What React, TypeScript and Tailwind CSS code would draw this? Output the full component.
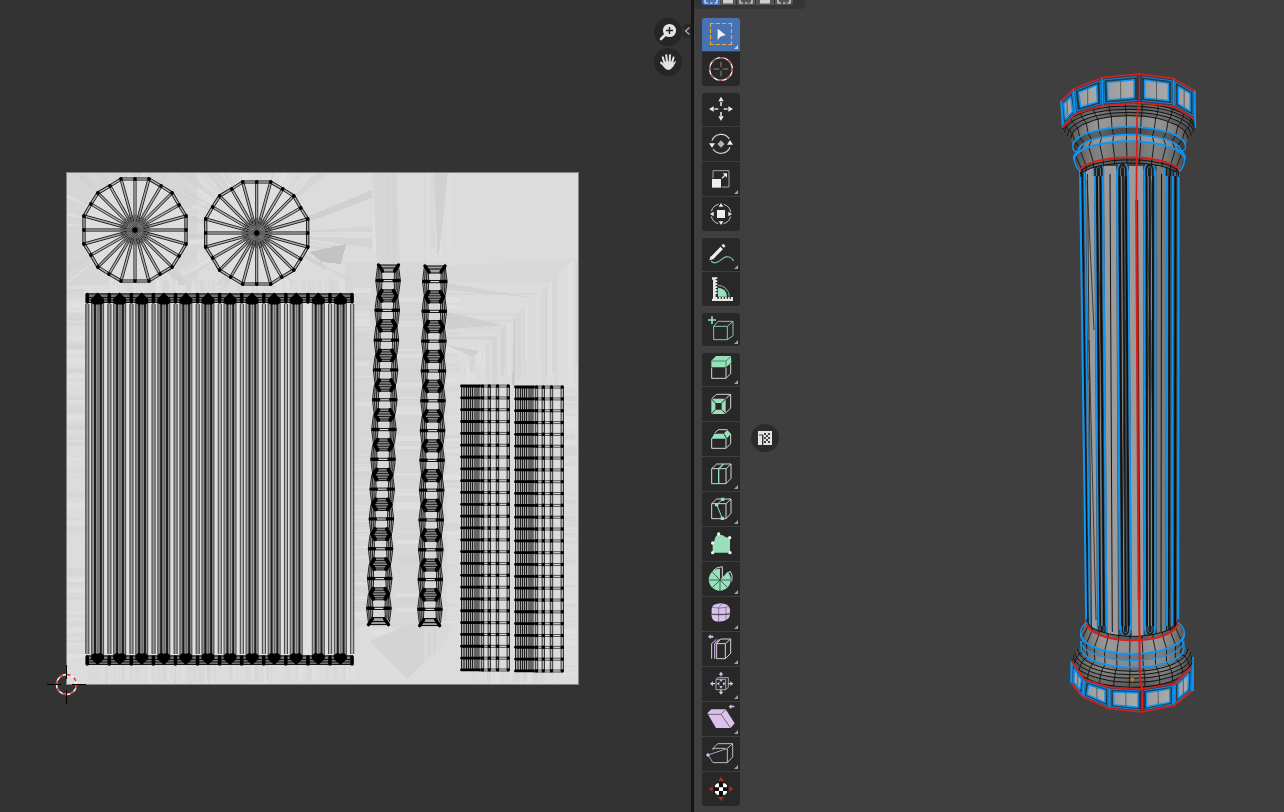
import React from "react";

type Pt = [number, number];

const INK = "#0a0a0a";
const BLUE = "#0e96f5";
const RED = "#d8201a";
const MINT = "#97e0bb";
const LILAC = "#d9c3ea";
const LINE = "#d4d4d4";

function makeRandom(seed: number) {
  let s = seed;
  return () => {
    s = (s * 16807) % 2147483647;
    return s / 2147483647;
  };
}

const pts = (list: Pt[]) => list.map((p) => p.join(",")).join(" ");

/* ---------- UV editor: baked texture ---------- */

function streakBlock(seed: number, x: number, y: number, w: number, h: number, dir: "h" | "v", n: number) {
  const r = makeRandom(seed * 7919);
  const tones = ["#d2d2d2", "#d5d5d5", "#d8d8d8", "#e1e1e1", "#e3e3e3", "#d6d6d6"];
  return Array.from({ length: n }, (_, i) => {
    const tone = tones[Math.floor(r() * tones.length)];
    const t = 1 + Math.floor(r() * 5);
    const at = r();
    return dir === "h" ? (
      <rect key={`${seed}-${i}`} x={x} y={y + Math.floor(at * h)} width={w * (0.8 + r() * 0.2)} height={t} fill={tone} opacity={0.6} />
    ) : (
      <rect key={`${seed}-${i}`} x={x + Math.floor(at * w)} y={y} width={t} height={h * (0.8 + r() * 0.2)} fill={tone} opacity={0.6} />
    );
  });
}

function rays(seed: number, cx: number, cy: number) {
  const r = makeRandom(seed * 7919);
  return Array.from({ length: 46 }, (_, i) => {
    const a = r() * Math.PI * 2;
    const d = 0.01 + r() * 0.05;
    const len = 70 + r() * 50;
    const tone = ["#d0d0d0", "#e2e2e2", "#d5d5d5", "#cfcfcf"][Math.floor(r() * 4)];
    return (
      <polygon
        key={i}
        fill={tone}
        opacity={0.6}
        points={pts([
          [cx + Math.cos(a) * 30, cy + Math.sin(a) * 30],
          [cx + Math.cos(a - d) * len, cy + Math.sin(a - d) * len],
          [cx + Math.cos(a + d) * len, cy + Math.sin(a + d) * len],
        ])}
      />
    );
  });
}

function Texture() {
  return (
    <g shapeRendering="crispEdges">
      <rect x={67} y={173} width={511} height={511} fill="#dcdcdc" />
      <rect x={67} y={173} width={130} height={112} fill="#d6d6d6" />
      <rect x={345} y={262} width={102} height={365} fill="#d7d7d7" />
      <g clipPath="url(#wheelArea)">
        {rays(11, 135, 230)}
        {rays(57, 257, 233)}
      </g>
      <polygon points="309,252 346,244 341,264 322,262" fill="#c3c3c3" />
      <polygon points="309,216 372,190 372,198 309,222" fill="#d0d0d0" />
      {streakBlock(3, 67, 285, 20, 380, "h", 90)}
      {streakBlock(4, 353, 285, 20, 340, "h", 90)}
      {streakBlock(5, 396, 262, 28, 365, "h", 80)}
      {streakBlock(6, 443, 262, 18, 365, "h", 50)}
      {streakBlock(7, 563, 385, 15, 290, "h", 70)}
      {streakBlock(8, 86, 665, 267, 19, "v", 80)}
      {streakBlock(9, 86, 280, 267, 14, "v", 60)}
      {streakBlock(10, 372, 173, 32, 92, "v", 8)}
      {streakBlock(12, 418, 173, 30, 92, "v", 8)}
      {streakBlock(13, 461, 671, 102, 13, "v", 30)}
      <polygon points="372,173 396,173 400,264 377,264" fill="#d3d3d3" opacity={0.7} />
      <polygon points="434,173 448,173 438,264" fill="#d1d1d1" />
      <g clipPath="url(#belowDiagonal)">{streakBlock(14, 461, 262, 117, 124, "v", 50)}</g>
      <g clipPath="url(#aboveDiagonal)">
        {streakBlock(15, 446, 290, 110, 80, "h", 12)}
        <polygon points="447,266 576,258 552,283 447,282" fill="#d8d8d8" opacity={0.8} />
        <polygon points="447,312 503,325 447,329" fill="#cfcfcf" />
        <polygon points="447,345 480,351 472,357" fill="#d0d0d0" />
        <polygon points="447,283 535,298 447,290" fill="#d2d2d2" />
      </g>
      <polygon points="515,305 515,385 512,385" fill="#cbcbcb" />
      <path d="M545 290V382" stroke="#cfcfcf" />
      <polygon points="369,630 404,630 404,670" fill="#e0e0e0" />
      <polygon points="404,626 424,626 424,662 407,679 370,641" fill="#d4d4d4" />
      <polygon points="424,626 451,626 445,645 424,664" fill="#d9d9d9" />
      <path d="M429 628v30M434 628v26" stroke="#d0d0d0" />
    </g>
  );
}

/* ---------- UV editor: islands ---------- */

const QUADRANT: Pt[] = [
  [0, -51], [14, -51], [26, -44], [37, -37], [44, -25], [51, -14],
];

function wheelRim(): Pt[] {
  const out: Pt[] = [];
  for (let q = 0; q < 4; q++) {
    for (const [x, y] of QUADRANT) {
      if (q === 0) out.push([x, y]);
      if (q === 1) out.push([-y, x]);
      if (q === 2) out.push([-x, -y]);
      if (q === 3) out.push([y, -x]);
    }
  }
  return out;
}

function Wheel({ x, y }: { x: number; y: number }) {
  const rim = wheelRim();
  return (
    <g transform={`translate(${x} ${y})`}>
      <polygon points={pts(rim)} fill="#dedede" />
      {rim.map(([px, py], i) => (
        <path key={i} d={`M0 0L${px} ${py}`} stroke={INK} strokeWidth={3} />
      ))}
      <polygon points={pts(rim)} fill="none" stroke={INK} strokeWidth={3.2} />
      {rim.map(([px, py], i) => (
        <path key={i} d={`M${px * 0.05} ${py * 0.05}L${px} ${py}`} stroke="#a8a8a8" strokeWidth={1.6} />
      ))}
      <polygon points={pts(rim)} fill="none" stroke="#a8a8a8" strokeWidth={1.5} />
      {rim.map(([px, py], i) => (
        <path key={i} d={`M0 0L${px * 0.3} ${py * 0.3}`} stroke="#222" strokeWidth={0.7} />
      ))}
      {rim.map(([px, py], i) => (
        <circle key={i} cx={px} cy={py} r={1.9} fill="#000" />
      ))}
      <circle r={2.6} fill="#000" />
    </g>
  );
}

function FlutedIsland() {
  const caps = Array.from({ length: 12 }, (_, i) => 97.6 + i * 22.07);
  const seams = Array.from({ length: 13 }, (_, i) => 87.2 + i * 22.07);
  return (
    <g>
      <rect x={86} y={294} width={267} height={370} fill="#e0e0e0" />
      {seams.map((x, i) => (
        <g key={i} opacity={i === 10 ? 0 : 1}>
          <rect x={x - 1.6} y={304} width={3.4} height={350} fill={i < 6 ? "#9a9a9a" : "#b4b4b4"} />
          <path d={`M${x - 1.4} 304V654M${x + 1.7} 304V654`} stroke="#333" strokeWidth={0.9} />
        </g>
      ))}
      {caps.map((x, i) => (
        <g key={i}>
          <rect x={x - 6} y={300} width={12} height={358} fill={i < 6 ? "#8d8d8d" : "#a3a3a3"} />
          <path d={`M${x - 6} 300V658M${x + 6} 300V658`} stroke="#3a3a3a" strokeWidth={0.9} />
          <path d={`M${x - 2.6} 300V658M${x + 3.2} 300V658`} stroke="#1e1e1e" strokeWidth={2} />
          <path d={`M${x + 0.4} 300V658`} stroke="#505050" strokeWidth={0.8} />
        </g>
      ))}
      {[293, 655].map((y) => (
        <g key={y}>
          <rect x={86} y={y} width={267} height={10} fill="#747474" />
          <path d={`M86 ${y + 1}H353M86 ${y + 4.5}H353M86 ${y + 7}H353M86 ${y + 9.5}H353`} stroke="#151515" strokeWidth={1} />
        </g>
      ))}
      {seams.map((x, i) => (
        <path key={i} d={`M${x} 294.500V302M${x} 657V664`} stroke="#000" strokeWidth={3.6} strokeLinecap="round" />
      ))}
      {caps.map((x, i) => (
        <g key={i} fill="#000">
          <path d={`M${x} 292.500L${x + 6.5} 299V302Q${x + 5} 305 ${x + 2} 304.500H${x - 2}Q${x - 5} 305 ${x - 6.5} 302V299Z`} />
          <path d={`M${x} 665L${x + 6.5} 659V656Q${x + 5} 653 ${x + 2} 653L${x} 654L${x - 2} 653Q${x - 5} 653 ${x - 6.5} 656V659Z`} />
        </g>
      ))}
    </g>
  );
}

function ChainIsland({ topX, bottomX, topY }: { topX: number; bottomX: number; topY: number }) {
  const step = 29.8;
  const at = (y: number) => topX + ((bottomX - topX) * (y - topY)) / (step * 12);
  const hexes = Array.from({ length: 13 }, (_, i) => topY + 1 + i * step);
  const bars = Array.from({ length: 12 }, (_, i) => topY + 15.5 + i * step);
  return (
    <g fill="none" stroke="#000">
      {bars.map((y, i) => {
        const x = at(y);
        return (
          <g key={i}>
            {[-1, 1].map((s) => (
              <g key={s} strokeWidth={0.9} stroke="#111">
                {[-1, 1].map((v) => (
                  <g key={v}>
                    <polygon
                      points={pts([[x + s * 12, y], [x + s * 10.5, y + v * 14], [x + s * 6.5, y + v * 9], [x + s * 6, y]])}
                      fill="#aaaaaa"
                      stroke="none"
                    />
                    <path d={`M${x + s * 12.3} ${y}L${x + s * 10.5} ${y + v * 14}M${x + s * 10.3} ${y}L${x + s * 9.5} ${y + v * 12}M${x + s * 8.3} ${y}L${x + s * 8} ${y + v * 10}M${x + s * 6} ${y}L${x + s * 6.5} ${y + v * 9}`} />
                  </g>
                ))}
              </g>
            ))}
            <path d={`M${x - 6} ${y - 1}H${x + 6}M${x - 6} ${y + 1.2}H${x + 6}`} strokeWidth={0.9} />
            <path d={`M${x - 11} ${y}h5M${x + 6} ${y}h5`} strokeWidth={3.4} strokeLinecap="round" />
          </g>
        );
      })}
      {hexes.map((y, i) => {
        const x = at(y);
        if (i === 0 || i === 12) {
          const v = i === 0 ? 1 : -1;
          return (
            <g key={i}>
              <polygon points={pts([[x - 10, y - v], [x + 10, y - v], [x + 6, y + v * 6], [x - 6, y + v * 6]])} fill="#a0a0a0" strokeWidth={1} />
              <path d={`M${x - 8} ${y + v * 2}H${x + 8}`} strokeWidth={1} />
              <path d={`M${x - 10} ${y - v}L${x - 6} ${y + v * 5}M${x + 10} ${y - v}L${x + 6} ${y + v * 5}`} strokeWidth={3.4} strokeLinecap="round" />
            </g>
          );
        }
        return (
          <g key={i}>
            <polygon points={pts([[x - 10, y], [x - 6, y - 6], [x + 6, y - 6], [x + 10, y], [x + 6, y + 6], [x - 6, y + 6]])} fill="#8a8a8a" strokeWidth={0.9} />
            <path d={`M${x - 8} ${y - 3.5}H${x + 8}M${x - 8} ${y - 1}H${x + 8}M${x - 8} ${y + 1.5}H${x + 8}M${x - 8} ${y + 4}H${x + 8}`} strokeWidth={0.8} />
            <path d={`M${x - 6} ${y - 5}L${x - 9} ${y}L${x - 6} ${y + 5}M${x + 6} ${y - 5}L${x + 9} ${y}L${x + 6} ${y + 5}`} strokeWidth={4} strokeLinecap="round" strokeLinejoin="round" />
          </g>
        );
      })}
    </g>
  );
}

function GridIsland({ x, y }: { x: number; y: number }) {
  const rows = Array.from({ length: 25 }, (_, i) => y + i * 11.83);
  const h = 284;
  return (
    <g fill="none" stroke="#111">
      <rect x={x} y={y} width={18} height={h} fill="#a6a6a6" stroke="none" />
      {[0.5, 3, 5.5, 7.5, 9.5, 11.5, 14, 16, 18].map((d) => (
        <path key={d} d={`M${x + d} ${y}v${h}`} strokeWidth={0.9} />
      ))}
      {[21.5, 28.3, 36.5, 47.3].map((d) => (
        <g key={d}>
          <rect x={x + d - 1.2} y={y} width={2.4} height={h} fill="#b5b5b5" stroke="none" />
          <path d={`M${x + d - 1.2} ${y}v${h}M${x + d + 1.2} ${y}v${h}`} strokeWidth={0.8} />
        </g>
      ))}
      {rows.map((ry, i) => (
        <g key={i}>
          <path d={`M${x + 18} ${ry - 0.9}h30M${x + 18} ${ry + 1.1}h30`} strokeWidth={0.7} />
          <path d={`M${x + 0.5} ${ry}h18`} stroke="#000" strokeWidth={2.8} strokeLinecap="round" />
          {[21.5, 28.3, 36.5, 47.3].map((d) => (
            <circle key={d} cx={x + d} cy={ry} r={1.7} fill="#000" stroke="none" />
          ))}
        </g>
      ))}
    </g>
  );
}

function UvCanvas() {
  return (
    <svg className="absolute inset-0 h-full w-full" role="img" aria-label="UV layout">
      <defs>
        <clipPath id="wheelArea"><rect x={67} y={173} width={305} height={112} /></clipPath>
        <clipPath id="belowDiagonal"><polygon points="455,375 578,255 578,386 455,386" /></clipPath>
        <clipPath id="aboveDiagonal"><polygon points="446,255 578,255 455,375 446,380" /></clipPath>
      </defs>
      <rect x={66.5} y={172.5} width={512} height={512} fill="#dcdcdc" stroke="#858585" />
      <Texture />
      <Wheel x={135} y={230} />
      <Wheel x={256.7} y={233} />
      <FlutedIsland />
      <ChainIsland topX={388.5} bottomX={378.5} topY={265} />
      <ChainIsland topX={435} bottomX={429.7} topY={266} />
      <GridIsland x={461} y={386} />
      <GridIsland x={515} y={387} />
      <circle cx={66.5} cy={684.5} r={10} fill="none" stroke="#f5f5f5" strokeWidth={1.4} />
      <circle cx={66.5} cy={684.5} r={10} fill="none" stroke="#ee2222" strokeWidth={1.4} strokeDasharray="3.93 3.92" />
      <path d="M47 684.500h14M72 684.500h14M66.500 665v14M66.500 690v14" stroke="#000" />
    </svg>
  );
}

/* ---------- 3D viewport: column mesh ---------- */

type Ring = { l: number; r: number; end: number; apex: number; color?: string; w?: number };

const CAPITAL: Ring[] = [
  { l: 38, r: 434, end: 185, apex: 115 },
  { l: 40, r: 433, end: 192, apex: 123 },
  { l: 44, r: 430, end: 202, apex: 133 },
  { l: 52, r: 424, end: 212, apex: 142 },
  { l: 62, r: 414, end: 222, apex: 152 },
  { l: 69, r: 406, end: 242, apex: 186, color: BLUE, w: 5 },
  { l: 84, r: 392, end: 258, apex: 209, color: BLUE, w: 5 },
  { l: 72, r: 404, end: 283, apex: 229, color: BLUE, w: 6 },
  { l: 90, r: 388, end: 320, apex: 277, color: RED, w: 5 },
  { l: 91, r: 387, end: 327, apex: 285 },
  { l: 92, r: 386, end: 335, apex: 294 },
];

const BASE: Ring[] = [
  { l: 80, r: 355, end: 88, apex: 139 },
  { l: 80, r: 355, end: 96, apex: 151, color: RED, w: 6 },
  { l: 62, r: 373, end: 130, apex: 192, color: BLUE, w: 6 },
  { l: 62, r: 372, end: 153, apex: 211, color: BLUE, w: 4 },
  { l: 64, r: 372, end: 175, apex: 232, color: BLUE, w: 5 },
  { l: 53, r: 384, end: 176, apex: 244 },
  { l: 45, r: 391, end: 186, apex: 254 },
  { l: 40, r: 396, end: 196, apex: 265 },
  { l: 36, r: 399, end: 206, apex: 277 },
  { l: 34, r: 400, end: 214, apex: 292 },
];

const ringPoint = (g: Ring, a: number): Pt => [
  Math.round((g.l + g.r) / 2 - ((g.r - g.l) / 2) * Math.cos(a)),
  Math.round(g.end + (g.apex - g.end) * Math.sin(a)),
];

const arc = (g: Ring): Pt[] => Array.from({ length: 25 }, (_, i) => ringPoint(g, (Math.PI * i) / 24));

function Rings({ rings, tones }: { rings: Ring[]; tones: string[] }) {
  const angles = Array.from({ length: 11 }, (_, i) => (Math.PI * (i + 0.9)) / 12.2);
  return (
    <g fill="none" strokeLinejoin="round">
      {rings.slice(1).map((g, i) => (
        <polygon key={i} points={pts([...arc(rings[i]), ...arc(g).reverse()])} fill={tones[i % tones.length]} stroke="none" />
      ))}
      {rings.slice(1).map((g, i) => (
        <polygon key={i} points={pts([...arc(rings[i]), ...arc(g).reverse()])} fill="url(#roundShade)" stroke="none" />
      ))}
      {angles.map((a) => (
        <polyline key={a} points={pts(rings.map((g) => ringPoint(g, a)))} stroke="#0e0e0e" strokeWidth={2.6} />
      ))}
      {rings.map((g, i) => (
        <polyline key={i} points={pts(arc(g))} stroke={g.color ?? "#101010"} strokeWidth={g.w ?? 3} />
      ))}
    </g>
  );
}

function BlockRim({ upper, lower, inset }: { upper: Pt[]; lower: Pt[]; inset: number }) {
  return (
    <g strokeLinejoin="round">
      <polygon points={pts([...upper, ...[...lower].reverse()])} fill="#23405a" />
      {upper.slice(1).map((b, i) => {
        const a = upper[i];
        const c = lower[i + 1];
        const d = lower[i];
        const w = b[0] - a[0];
        const k = Math.min(inset, w * 0.22);
        const v = inset;
        const slopeT = (b[1] - a[1]) / w;
        const slopeB = (c[1] - d[1]) / (c[0] - d[0]);
        const quad = (m: number, n: number): Pt[] => [
          [a[0] + m, a[1] + slopeT * m + n],
          [b[0] - m, b[1] - slopeT * m + n],
          [c[0] - m, c[1] - slopeB * m - n],
          [d[0] + m, d[1] + slopeB * m - n],
        ];
        const inner = quad(k, v);
        const mid = (inner[0][0] + inner[1][0]) / 2;
        return (
          <g key={i}>
            <polygon points={pts(quad(k * 0.35, v * 0.45))} fill="#2a3a44" stroke={BLUE} strokeWidth={2.6} />
            <polygon points={pts(inner)} fill="url(#panelShade)" stroke={BLUE} strokeWidth={4.5} />
            <path d={`M${mid} ${(inner[0][1] + inner[1][1]) / 2}V${(inner[2][1] + inner[3][1]) / 2}`} stroke="#3a3a3a" strokeWidth={2} />
          </g>
        );
      })}
      {upper.map((p, i) => (
        <path key={i} d={`M${p[0]} ${p[1]}L${lower[i][0]} ${lower[i][1]}`} stroke={i === 3 ? RED : BLUE} strokeWidth={5} />
      ))}
      <path d={`M${upper[3][0] - 5} ${upper[3][1] + 4}V${lower[3][1] - 4}M${upper[3][0] + 5} ${upper[3][1] + 4}V${lower[3][1] - 4}`} stroke="#401010" strokeWidth={2.5} />
      <g fill="none" stroke={RED} strokeWidth={5}>
        <polyline points={pts(upper)} />
        <polyline points={pts(lower)} />
      </g>
    </g>
  );
}

const LANDS: [number, number, number, number][] = [
  [1086, 1094, 1091, 1097],
  [1104, 1116, 1107.5, 1118],
  [1129, 1143, 1132, 1143.5],
  [1156.5, 1166, 1157, 1165.5],
];

const SHAFT_BLUE: [number, number, number][] = [
  [1080, 1086.3, 2], [1084.5, 1089.8, 1.6], [1094.8, 1098.5, 1.7], [1102.8, 1106.5, 2], [1117, 1120, 2],
  [1128, 1131, 1.9], [1144.3, 1144.8, 2], [1155.3, 1155.3, 1.8], [1167, 1167, 1.8], [1172.8, 1172, 1.8], [1178.6, 1178.2, 2],
];

const SHAFT_DARK: [number, number, number][] = [
  [1082, 1088, 1.6], [1087.5, 1091.5, 0.8], [1097, 1100, 1.8], [1100.3, 1104, 1.6], [1119.5, 1122.3, 2], [1123, 1125.8, 1.2],
  [1126, 1129, 1.8], [1146.5, 1147, 1.8], [1149.8, 1149.8, 1.2], [1153, 1153, 1.8], [1169.3, 1168.9, 1.6], [1175.5, 1175, 2], [1110, 1112.3, 1], [1161.5, 1161, 1],
];

function Shaft() {
  return (
    <g>
      <polygon points="1079,172 1179,172 1178.5,634 1086,634" fill="#454a4e" />
      {LANDS.map((l, i) => (
        <polygon key={i} points={pts([[l[0], 166], [l[1], 166], [l[3], 638], [l[2], 638]])} fill={i === 3 ? "#7c7c7c" : "#9b9b9b"} />
      ))}
      {[[1098.6, 1102], [1121.3, 1124], [1148, 1148.5], [1151.5, 1151.5]].map(([a, b]) => (
        <path key={a} d={`M${a} 175L${b} 632`} stroke="#858585" strokeWidth={1} />
      ))}
      {SHAFT_DARK.map(([a, b, w]) => (
        <path key={a} d={`M${a} 174L${b} 632`} stroke="#121212" strokeWidth={w} />
      ))}
      {[[1096, 1102, 1104, 1099], [1118, 1125, 1121, 1130], [1146, 1152, 1153, 1147]].map(([a, b, c, d]) => (
        <path key={a} d={`M${a} 180L${c} 430M${b} 180L${d} 420M${b} 320L${c} 630`} stroke="#111" strokeWidth={0.8} opacity={0.7} />
      ))}
      <path d="M1087 180L1094 330M1089 340L1096 620M1082 180L1088 380" stroke="#222" strokeWidth={0.8} />
      {SHAFT_BLUE.map(([a, b, w]) => (
        <path key={a} d={`M${a} 170L${b} 630`} stroke={BLUE} strokeWidth={w} />
      ))}
      {[[1098.5, 1102], [1122.5, 1125.5], [1149.5, 1150], [1170, 1169.7]].map(([a, b]) => (
        <g key={a} fill="#1f2224" stroke={BLUE} strokeWidth={1.5}>
          <path d={`M${a - 5} 176V168Q${a} 156 ${a + 5} 168V176`} />
          <path d={`M${b - 4.5} 626V632Q${b} 641 ${b + 4.5} 632V626`} />
          <path d={`M${a - 2} 176V169Q${a} 164 ${a + 2} 169V176`} stroke="#777" strokeWidth={0.8} />
          <path d={`M${b - 2} 626V631Q${b} 635 ${b + 2} 631V626`} stroke="#777" strokeWidth={0.8} />
        </g>
      ))}
    </g>
  );
}

function ColumnMesh() {
  return (
    <svg className="absolute inset-0 h-full w-full" role="img" aria-label="Column mesh">
      <defs>
        <linearGradient id="roundShade" x1="0" x2="1" y1="0" y2="0">
          <stop offset="0" stopColor="#222" stopOpacity={0.55} />
          <stop offset="0.35" stopColor="#fff" stopOpacity={0.05} />
          <stop offset="0.6" stopColor="#fff" stopOpacity={0} />
          <stop offset="1" stopColor="#222" stopOpacity={0.55} />
        </linearGradient>
        <linearGradient id="panelShade" x1="0" x2="1" y1="0" y2="0">
          <stop offset="0" stopColor="#9a9da0" />
          <stop offset="1" stopColor="#aaaaaa" />
        </linearGradient>
      </defs>
      <g transform="translate(-694 0)">
        <Shaft />
        <g transform="translate(1050 65) scale(0.33333)">
          <Rings rings={CAPITAL} tones={["#666", "#555", "#6a6a6a", "#5c5c5c", "#8c8c8c", "#484848", "#929292", "#757575", "#4a4a4a", "#555"]} />
          <path d="M69 242Q66 262 84 260M84 258Q66 270 72 286M406 242Q410 258 392 258M392 258Q410 266 404 284M72 284Q76 306 91 320M404 284Q402 306 388 320" fill="none" stroke={BLUE} strokeWidth={4} />
          <BlockRim
            upper={[[33, 108], [70, 72], [156, 38], [268, 27], [371, 41], [434, 77]]}
            lower={[[38, 187], [76, 147], [158, 122], [268, 113], [371, 124], [434, 163]]}
            inset={16}
          />
          <path d="M434 77L436 188" stroke={BLUE} strokeWidth={5} />
          <path d="M268 113V126L261 150L259 420" fill="none" stroke={RED} strokeWidth={5} />
        </g>
        <path d="M1136.300 200L1138.800 600" stroke={RED} strokeWidth={2.4} />
        <path d="M1137.600 200L1140 600" stroke="#7c1512" strokeWidth={1} />
        <g transform="translate(1060 590) scale(0.33333)">
          <Rings rings={BASE} tones={["#555", "#8e8e8e", "#707070", "#858585", "#6a6a6a", "#7c7c7c", "#707070", "#666", "#5a5a5a"]} />
          <path d="M80 98Q60 110 62 132Q63 146 70 150Q60 160 64 176M355 98Q374 112 373 132Q372 146 366 152Q374 162 372 176" fill="none" stroke={BLUE} strokeWidth={4} />
          <BlockRim
            upper={[[34, 212], [73, 268], [148, 292], [247, 297], [342, 282], [398, 226]]}
            lower={[[33, 278], [68, 321], [148, 356], [247, 366], [342, 347], [396, 303]]}
            inset={13}
          />
          <path d="M399 200V304" stroke={BLUE} strokeWidth={5} />
          <path d="M237 0L239 230L241 270L247 297" fill="none" stroke={RED} strokeWidth={6} />
          <circle cx={217} cy={269} r={7} fill="#b97a33" stroke="#5b4425" strokeWidth={2} />
        </g>
      </g>
    </svg>
  );
}

/* ---------- toolbar ---------- */

const cube = (x: number, y: number) =>
  `M${x} ${y}h43v45h-43zM${x} ${y}l15 -14h43v43l-15 16M${x + 43} ${y}l15 -14`;

type Tool = { name: string; view: string; more?: boolean; art: React.ReactNode };

const TOOL_GROUPS: Tool[][] = [
  [
    {
      name: "Select Box", view: "186 54 114 99", more: true,
      art: (
        <>
          <path d="M211.500 80V70.500H221M227 70.500h13M246 70.500h13M265 70.500H274.500V80M274.500 86v13M274.500 105v13M274.500 124v9.500H265M259 133.500h-13M240 133.500h-13M221 133.500H211.500V124M211.500 118v-13M211.500 99v-13" stroke="#f5a92f" strokeWidth={3.600} />
          <path d="M233 86V120L241 110L257 105Z" fill="#f0f0f0" />
        </>
      ),
    },
    {
      name: "Cursor", view: "186 156 114 102",
      art: (
        <>
          <circle cx={243} cy={207} r={34} stroke="#f0f0f0" strokeWidth={4} />
          <circle cx={243} cy={207} r={34} stroke="#b8464a" strokeWidth={4} strokeDasharray="13.35 13.35" strokeDashoffset={4} />
          <path d="M221 207h17M248 207h17M243 185v17M243 212v17" stroke="#858585" strokeWidth={3} />
        </>
      ),
    },
  ],
  [
    {
      name: "Move", view: "186 279 114 99",
      art: (
        <>
          <path d="M243 290l8 14h-16zM243 363l8-14h-16zM207 327l14-8v16zM279 327l-14-8v16z" fill="#eee" />
          <path d="M243 306v12M243 336v12M223 327h12M251 327h12" stroke="#ddd" strokeWidth={5} />
        </>
      ),
    },
    {
      name: "Rotate", view: "186 381 114 102",
      art: (
        <>
          <path d="M216 422A29 29 0 0 1 268 417M270 442A29 29 0 0 1 219 447" stroke={LINE} strokeWidth={3.500} />
          <path d="M207 430h18l-9 13zM261 434h18l-9-14z" fill="#eee" />
          <path d="M243 421l11 11-11 11-11-11z" fill="#b4b4b4" />
        </>
      ),
    },
    {
      name: "Scale", view: "36 21 114 102", more: true,
      art: (
        <>
          <path d="M69 70V47H117V96H95" stroke="#a5a5a5" strokeWidth={3} />
          <rect x={66} y={72} width={27} height={26} fill="#eee" />
          <path d="M96 70l10-10" stroke="#ddd" strokeWidth={4} />
          <path d="M98 55h13v13z" fill="#eee" />
        </>
      ),
    },
    {
      name: "Transform", view: "36 126 114 102",
      art: (
        <>
          <circle cx={93} cy={177} r={30} stroke="#c6c6c6" strokeWidth={3} strokeDasharray="31 16.1" strokeDashoffset={-8} />
          <rect x={81} y={165} width={24} height={24} fill="#eee" />
          <path d="M93 144l7 11h-14zM93 210l7-11h-14zM60 177l11-7v14zM126 177l-11-7v14z" fill="#eee" />
        </>
      ),
    },
  ],
  [
    {
      name: "Annotate", view: "36 249 114 99", more: true,
      art: (
        <>
          <path d="M63 318C73 328 84 323 94 314C105 303 121 300 131 318" stroke="#7cc49f" strokeWidth={3.500} />
          <path d="M66 309L95 279M98 275L103 270" stroke="#eee" strokeWidth={10} />
          <path d="M58 316l4-13 9 9z" fill="#eee" />
        </>
      ),
    },
    {
      name: "Measure", view: "36 351 114 102",
      art: (
        <>
          <path d="M84 398a27 27 0 0 1 27 27h-27z" fill={MINT} />
          <path d="M84 391a34 34 0 0 1 34 34" stroke="#79bd9a" strokeWidth={3} />
          <path d="M66 367H82V372H77V376H82V381H77V385H82V390H77V394H82V399H77V403H82V408H77V412H82V417H77V426H82V431H87V426H92V431H96V426H101V431H105V426H110V431H114V426H119V431H123V426H129V438H66V431H69V374H66z" fill="#e6e6e6" />
        </>
      ),
    },
  ],
  [
    {
      name: "Add Cube", view: "36 24 114 99", more: true,
      art: (
        <>
          <path d="M71 64h41v40h-41zM71 64l13-15h45v43l-17 12M112 64l17-15" stroke="#84c9a6" strokeWidth={3} />
          <path d="M66 34v23M54 45h24" stroke={MINT} strokeWidth={5} />
        </>
      ),
    },
  ],
  [
    {
      name: "Extrude Region", view: "36 144 114 99", more: true,
      art: (
        <>
          <path d="M65 188V220H108V188M108 220L122 206V177" stroke={LINE} strokeWidth={3} />
          <path d="M64 167L78 153H123L124 173L108 187H64z" fill={MINT} />
          <path d="M64 168H108V187M108 168L123 154" stroke="#2f5a45" strokeWidth={2} />
        </>
      ),
    },
    {
      name: "Inset Faces", view: "36 246 114 102",
      art: (
        <>
          <path d="M65 281L80 268H122V309L107 324M107 281L122 268" stroke={LINE} strokeWidth={3} />
          <path fillRule="evenodd" d="M64 281H107V327H64zM76 294V314H95V294z" fill={MINT} />
          <path d="M64 281l12 13M107 281l-12 13M64 327l12-13M107 327l-12-13" stroke="#2b2b2b" strokeWidth={3} />
        </>
      ),
    },
    {
      name: "Bevel", view: "36 351 114 102",
      art: (
        <>
          <path d="M65 400V430H108V400M108 430L122 416V387M74 384L85 374H112" stroke={LINE} strokeWidth={3} />
          <path d="M64 401L73 386H101L109 401z" fill={MINT} />
          <path d="M102 385L112 375L123 386L111 400z" fill={MINT} />
          <path d="M101 385L110 401" stroke="#2f5a45" strokeWidth={2} />
        </>
      ),
    },
    {
      name: "Loop Cut", view: "36 6 114 102", more: true,
      art: (
        <>
          <path d={cube(65, 41)} stroke={LINE} strokeWidth={3} />
          <path d="M86 86V41L101 27" stroke={MINT} strokeWidth={4} />
        </>
      ),
    },
    {
      name: "Knife", view: "36 111 114 102", more: true,
      art: (
        <>
          <path d={cube(65, 146)} stroke={LINE} strokeWidth={3} />
          <path d="M98 133L80 149L97 190" stroke={MINT} strokeWidth={3} />
          <path d="M93 128h10v10h-10zM75 144h10v10h-10zM92 185h10v10h-10z" fill={MINT} />
        </>
      ),
    },
    {
      name: "Poly Build", view: "36 216 114 102",
      art: (
        <>
          <path d="M68 293V268C75 263 71 248 82 240H97Q104 247 120 249V293z" fill={MINT} />
          <g fill="#f2f2f2">
            <circle cx={86} cy={237} r={5} /><circle cx={119} cy={248} r={5} /><circle cx={68} cy={264} r={5} />
            <circle cx={68} cy={293} r={5} /><circle cx={120} cy={293} r={5} />
          </g>
        </>
      ),
    },
    {
      name: "Spin", view: "36 321 114 102", more: true,
      art: (
        <>
          <path d="M70 346Q78 337 97 335V370M108 357L121 349Q130 362 125 379" stroke={LINE} strokeWidth={3} />
          <path d="M90 375V341A33 33 0 1 0 113 351z" fill={MINT} />
          <path d="M90 375V408M57 375H123M90 375L67 351M90 375L67 398M90 375L113 398" stroke="#2d4a3c" strokeWidth={2.500} />
        </>
      ),
    },
    {
      name: "Smooth", view: "36 426 114 102", more: true,
      art: (
        <>
          <path d="M72 449Q92 440 111 449Q122 456 120 473Q121 488 110 494Q92 503 74 498Q63 493 65 474Q63 455 72 449z" fill={LILAC} />
          <path d="M67 478Q88 482 108 478L120 473M86 500V456M66 457Q88 462 108 457L118 452M86 457L96 446M108 457V496" stroke="#4a3f55" strokeWidth={1.600} />
          <path d="M66 478H120" stroke="#1c1620" strokeWidth={2} />
        </>
      ),
    },
    {
      name: "Edge Slide", view: "36 6 114 102", more: true,
      art: (
        <>
          <path d="M80 41h26v45h-26zM80 41l12-14h30v43l-16 16M106 41l16-14M65 86V41L79 28" stroke={LINE} strokeWidth={3} />
          <path d="M74 86V41L88 28" stroke="#c29ad9" strokeWidth={4} />
          <path d="M54 20l8-7v4h8v6h-8v4z" fill={LILAC} />
        </>
      ),
    },
    {
      name: "Shrink/Fatten", view: "36 111 114 102", more: true,
      art: (
        <>
          <path d="M78 148h29v31h-29zM78 148l6-5h31v29l-8 7" stroke="#a6a6a6" strokeWidth={3} />
          <path d="M93 125l7 9h-5v5h-4v-5h-5zM93 194l7-9h-5v-5h-4v5h-5zM60 161l9-7v5h6v4h-6v5zM130 161l-9-7v5h-6v4h6v5zM93 146l5 8h-10zM93 176l5-8h-10zM80 161l8-5v10zM107 161l-8-5v10z" fill={LILAC} />
        </>
      ),
    },
    {
      name: "Shear", view: "36 216 114 102", more: true,
      art: (
        <>
          <path d="M52 250L64 238H107L134 280L122 294H78z" fill={LILAC} />
          <path d="M53 253H93L121 293M93 253L107 239" stroke="#3c3346" strokeWidth={2} />
          <path d="M116 230l8-7v4h9v5h-9v5z" fill={LILAC} />
        </>
      ),
    },
    {
      name: "Rip Region", view: "36 321 114 102", more: true,
      art: (
        <>
          <path d="M69 360V355L83 341H128V381L112 398H69M112 355V398M112 355L128 341M69 355H106" stroke="#bdbdbd" strokeWidth={3} />
          <path d="M69 398L54 375L111 356" stroke="#b79bc9" strokeWidth={3} />
          <circle cx={54} cy={375} r={5} fill={LILAC} />
        </>
      ),
    },
    {
      name: "Push/Pull", view: "36 426 114 102",
      art: (
        <>
          <defs>
            <clipPath id="checkerDisc"><circle cx={93} cy={477} r={21} /></clipPath>
          </defs>
          <path d="M93 440l9 13h-18zM93 514l9-13h-18zM56 477l12-9v18zM130 477l-12-9v18z" fill="#a52a2a" />
          <g clipPath="url(#checkerDisc)">
            <rect x={72} y={456} width={42} height={42} fill="#0c0c0c" />
            <path d="M75 460h12v12h-12zM99 460h12v12h-12zM87 472h12v11h-12zM75 483h12v12h-12zM99 483h12v12h-12z" fill="#fff" />
          </g>
        </>
      ),
    },
  ],
];

function ToolButton({ tool, active, first, last }: { tool: Tool; active: boolean; first: boolean; last: boolean }) {
  return (
    <button
      type="button"
      aria-label={tool.name}
      aria-pressed={active}
      className={`relative block w-full ${first ? "h-[33px] rounded-t-[3px]" : "h-[34px]"} ${last ? "rounded-b-[3px]" : ""} ${active ? "bg-[#4772b3]" : "bg-[#282828]"}`}
    >
      <svg viewBox={tool.view} className="h-full w-full" fill="none">{tool.art}</svg>
      {tool.more && (
        <svg viewBox="0 0 4 4" className="absolute right-0.5 bottom-0.5 size-1">
          <path d="M4 0V4H0z" fill={active ? "#c3d0e6" : "#a0a0a0"} />
        </svg>
      )}
    </button>
  );
}

const SELECT_MODES = [
  { name: "Set", style: "w-[18px] rounded-bl-[3px] bg-[#4772b3]" },
  { name: "Extend", style: "w-4 mr-px bg-[#545454]" },
  { name: "Subtract", style: "w-[18px] mr-px bg-[#545454]" },
  { name: "Difference", style: "w-[18px] mr-px bg-[#545454]" },
  { name: "Intersect", style: "w-[18px] rounded-br-[3px] bg-[#545454]" },
];

function ModeBar() {
  return (
    <div className="relative flex h-[9px] w-[111px] rounded-br bg-[#353535] pl-2">
      {SELECT_MODES.map((m, i) => (
        <button key={m.name} type="button" aria-label={m.name} className={`flex h-[5px] items-start justify-center ${m.style}`}>
          <svg viewBox="0 0 14 4" className="h-1 w-3.5" fill="none">
            {i === 1 || i === 3 ? (
              <rect x={2} y={0} width={10} height={3.5} fill="#cfcfcf" />
            ) : (
              <path d="M1 0V3H4M6 3H8.500M10.500 3H13V0" stroke="#e8e8e8" strokeWidth={1.2} />
            )}
          </svg>
        </button>
      ))}
    </div>
  );
}

export default function App() {
  return (
    <main className="grid h-screen min-h-[808px] grid-cols-[691fr_3px_590fr] overflow-hidden bg-[#161616] font-['Liberation_Sans',sans-serif]">
      <section aria-label="UV editor" className="relative overflow-hidden bg-[#333333]">
        <UvCanvas />
        <div className="absolute top-[18px] right-0 flex items-start gap-px">
          <div className="flex flex-col gap-0.5">
            <button type="button" aria-label="Zoom" className="grid size-7 place-items-center rounded-full bg-[#262626]">
              <svg viewBox="0 0 18 18" className="size-[18px]" fill="none">
                <path d="M2 16L6.500 11.500" stroke="#e2e2e2" strokeWidth={2.6} strokeLinecap="round" />
                <circle cx={10.500} cy={7.500} r={6.600} fill="#e2e2e2" />
                <path d="M10.500 4v7M7 7.500h7" stroke="#222" strokeWidth={1.4} />
              </svg>
            </button>
            <button type="button" aria-label="Pan" className="grid size-7 place-items-center rounded-full bg-[#262626]">
              <svg viewBox="0 0 18 18" className="size-[18px]" fill="none" stroke="#e2e2e2" strokeLinecap="round" strokeLinejoin="round">
                <path d="M5.500 10L3.800 4.200M8 9L7.200 2.200M10.700 9L11 2.200M13 10L14.500 4.500" strokeWidth={2} />
                <path d="M2 9.500L6 13.500" strokeWidth={2} />
                <path d="M5.500 9H13L14.500 10L16.500 8.500L13.500 14L11 16.200H7.500L5 13.500z" fill="#e2e2e2" strokeWidth={1} />
              </svg>
            </button>
          </div>
          <button type="button" aria-label="Open sidebar" className="mt-1.5 grid h-3.5 w-2 place-items-center rounded-l bg-[#282828]">
            <svg viewBox="0 0 6 8" className="h-2 w-1.5" fill="none">
              <path d="M5.500 0.500L1.500 4L5.500 7.500" stroke="#b0b0b0" strokeWidth={1.300} />
            </svg>
          </button>
        </div>
      </section>
      <div className="bg-[#161616]" />
      <section aria-label="3D viewport" className="relative overflow-hidden bg-[#3f3f3f]">
        <ColumnMesh />
        <ModeBar />
        <div className="relative flex items-center gap-[11px]">
          <nav aria-label="Tools" className="ml-2 flex w-[38px] flex-col gap-[7px] pt-[9px]">
            {TOOL_GROUPS.map((group, g) => (
              <div key={g} className="flex flex-col gap-px">
                {group.map((tool, i) => (
                  <ToolButton key={tool.name} tool={tool} active={g === 0 && i === 0} first={i === 0} last={i === group.length - 1} />
                ))}
              </div>
            ))}
          </nav>
          <button type="button" aria-label="Show asset tools" className="mt-[60px] grid size-7 place-items-center rounded-full bg-[#2b2b2b]">
            <svg viewBox="0 0 16 16" className="size-4" fill="none">
              <path d="M1 1H15V15H6V5H1z" fill="#e4e4e4" />
              <path d="M1 1H5V15H1z" fill="#e4e4e4" />
              <path d="M2 5H6V14" stroke="#444" strokeWidth={1} />
              <path d="M7 3h2v2h-2zM11 3h2v2h-2zM9 5h2v2h-2zM7 7h2v2h-2zM11 7h2v2h-2zM9 9h2v2h-2zM7 11h2v2h-2zM11 11h2v2h-2z" fill="#444" />
            </svg>
          </button>
        </div>
      </section>
    </main>
  );
}
